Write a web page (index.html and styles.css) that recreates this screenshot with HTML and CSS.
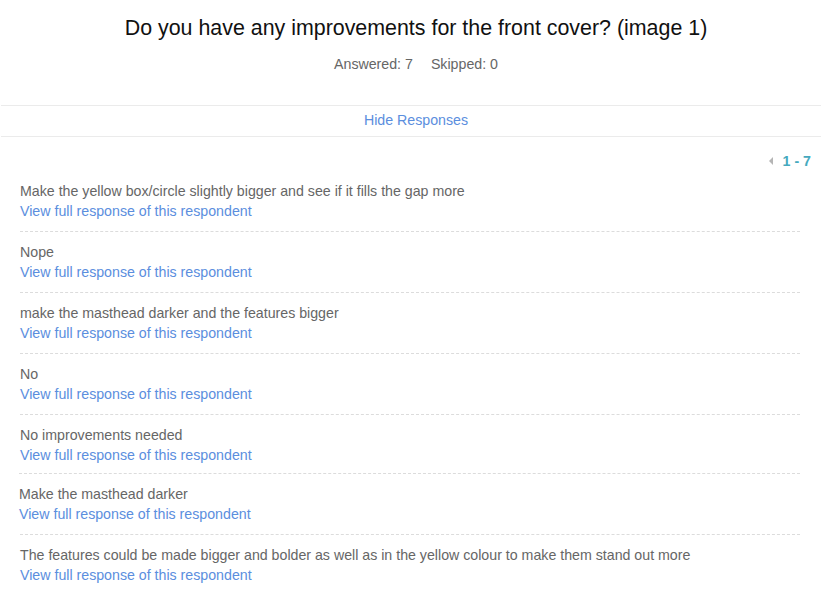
FILE: index.html
```html
<!DOCTYPE html>
<html>
<head>
<meta charset="utf-8">
<link rel="stylesheet" href="styles.css">
</head>
<body>
<div class="page">
  <header class="head">
    <h1 class="title">Do you have any improvements for the front cover? (image 1)</h1>
    <div class="stats"><span>Answered: 7</span><span>Skipped: 0</span></div>
  </header>
  <div class="toggle"><a class="link" href="#">Hide Responses</a></div>
  <div class="pager"><span class="arrow"></span><span class="range">1 - 7</span></div>
  <ul class="responses">
    <li class="resp"><div class="text">Make the yellow box/circle slightly bigger and see if it fills the gap more</div><a class="link" href="#">View full response of this respondent</a></li>
    <li class="resp"><div class="text">Nope</div><a class="link" href="#">View full response of this respondent</a></li>
    <li class="resp"><div class="text">make the masthead darker and the features bigger</div><a class="link" href="#">View full response of this respondent</a></li>
    <li class="resp"><div class="text">No</div><a class="link" href="#">View full response of this respondent</a></li>
    <li class="resp resp-tight"><div class="text">No improvements needed</div><a class="link" href="#">View full response of this respondent</a></li>
    <li class="resp resp-shift"><div class="text">Make the masthead darker</div><a class="link" href="#">View full response of this respondent</a></li>
    <li class="resp"><div class="text">The features could be made bigger and bolder as well as in the yellow colour to make them stand out more</div><a class="link" href="#">View full response of this respondent</a></li>
  </ul>
</div>
</body>
</html>
```

FILE: styles.css
```css
html, body {
  margin: 0;
  padding: 0;
  background: #fff;
}
body {
  font-family: "Liberation Sans", Arial, sans-serif;
  color: #666;
  font-size: 14.2px;
}
.page {
  width: 823px;
}
.head {
  text-align: center;
  padding: 16px 0 0 10px;
  height: 106px;
  box-sizing: border-box;
  border-bottom: 1px solid #ebebeb;
  margin: 0 2px 0 1px;
}
.title {
  margin: 0;
  font-size: 21.4px;
  font-weight: normal;
  color: #111;
  line-height: 24px;
}
.stats {
  margin-top: 14px;
  line-height: 20px;
  display: flex;
  justify-content: center;
  gap: 18px;
  color: #666;
}
.toggle {
  text-align: center;
  line-height: 29px;
  padding: 0 0 1px 10px;
  border-bottom: 1px solid #ebebeb;
  margin: 0 2px 0 1px;
}
.link {
  color: #5b8ede;
  text-decoration: none;
  font-size: 14.2px;
}
.pager {
  display: flex;
  justify-content: flex-end;
  align-items: center;
  gap: 10px;
  padding: 15px 12px 0 0;
  line-height: 18px;
}
.arrow {
  width: 0;
  height: 0;
  border-top: 4px solid transparent;
  border-bottom: 4px solid transparent;
  border-right: 4px solid #b5b5b5;
}
.range {
  font-weight: bold;
  color: #45a9be;
}
.responses {
  list-style: none;
  margin: 0 23px 0 20px;
  padding: 0;
}
.resp {
  padding: 10px 0;
  line-height: 20px;
  border-top: 1px dashed #dcdcdc;
}
.resp:first-child {
  border-top: none;
  padding-top: 11px;
}
.resp-tight {
  padding-bottom: 8px;
}
.resp-shift {
  margin-left: -1px;
}
.text {
  color: #666;
}
```
